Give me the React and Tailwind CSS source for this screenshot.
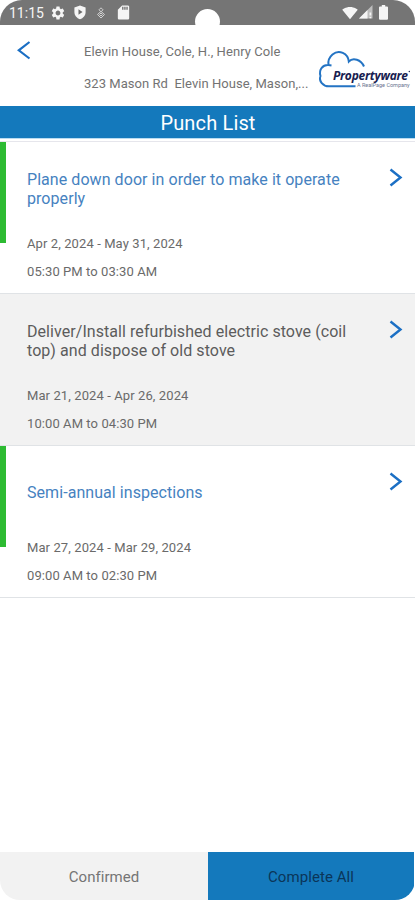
import React from 'react'
import { MdSettings, MdSdCard, MdSignalWifi4Bar } from 'react-icons/md'

const tasks = [
  {
    id: 1,
    title: ['Plane down door in order to make it operate', 'properly'],
    dates: 'Apr 2, 2024 - May 31, 2024',
    hours: '05:30 PM to 03:30 AM',
    open: true,
  },
  {
    id: 2,
    title: ['Deliver/Install refurbished electric stove (coil', 'top) and dispose of old stove'],
    dates: 'Mar 21, 2024 - Apr 26, 2024',
    hours: '10:00 AM to 04:30 PM',
    open: false,
  },
  {
    id: 3,
    title: ['Semi-annual inspections'],
    dates: 'Mar 27, 2024 - Mar 29, 2024',
    hours: '09:00 AM to 02:30 PM',
    open: true,
  },
]

export default function App() {
  return (
    <div className="h-[900px] w-[415px] bg-white font-['Roboto',sans-serif]">
      <div className="flex h-full flex-col overflow-hidden rounded-t-[22px] rounded-b-[20px] bg-white">
        <StatusBar />
        <Header />
        <div className="flex h-8 shrink-0 items-center justify-center bg-[#1479bc] pt-0.5 pl-px text-[20px] tracking-[0.15px] text-white">
          <h1>Punch List</h1>
        </div>
        <div className="h-1 shrink-0 border-t border-b border-t-[#b9dcf1] border-b-[#e6e6ec]" />
        <ul>
          {tasks.map((t) => (
            <TaskRow key={t.id} task={t} />
          ))}
        </ul>
        <div className="mt-auto flex h-12 shrink-0">
          <button className="w-[208px] bg-[#f2f2f2] pt-0.5 text-[15px] tracking-[0.03px] text-[#757575]">Confirmed</button>
          <button className="mr-px flex-1 bg-[#1479bc] pt-0.5 text-[15px] tracking-[0.08px] text-[#0b3558]">Complete All</button>
        </div>
      </div>
    </div>
  )
}

function StatusBar() {
  return (
    <div className="relative flex h-[25px] shrink-0 items-center bg-[#757575] pl-[9px] text-[#f5f5f5]">
      <span className="w-9 pt-0.5 text-[14px]">11:15</span>
      <MdSettings className="ml-[5px] size-4" />
      <svg className="ml-2 h-[15px] w-3" viewBox="0 0 12 15">
        <path d="M6 0.5 11.6 2.5V7c0 3.4-2.3 6.1-5.6 7.3C2.7 13.1.4 10.4.4 7V2.5Z" fill="currentColor" />
        <path d="M4.500 4.300 8.500 7 4.500 9.700Z" fill="#6b6b6b" />
      </svg>
      <svg className="ml-[10px] h-3 w-2.5" viewBox="0 0 10 12" fill="none" stroke="#d0d0d0">
        <path d="M5 .8 7 2.800 5 4.800 3 2.800ZM5 4.300 8.500 7.500 5 11 1.500 7.500ZM5 6 6.500 7.500 5 9 3.500 7.500Z" />
      </svg>
      <MdSdCard className="ml-[9px] size-[17px]" />
      {/* camera cutout */}
      <div className="absolute top-[9px] left-[195px] size-[25px] rounded-full bg-white" />
      <MdSignalWifi4Bar className="absolute top-[5px] left-[342px] size-4" />
      <svg className="absolute top-[5px] left-[359px] size-3.5" viewBox="0 0 14 14">
        <path d="M0 13.500 13.500 0V13.500Z" fill="#bdbdbd" />
        <path d="M0 13.500 8.500 5V13.500ZM10.500 7.500h1.700v3h-1.700ZM10.500 11.700h1.700v1.500h-1.700Z" fill="#f5f5f5" />
      </svg>
      <svg className="absolute top-[5px] left-[379px] h-[15px] w-[9px]" viewBox="0 0 9 15" fill="currentColor">
        <path d="M2.800 0h3.400v1.500H8q1 0 1 1V13.800q0 1-1 1H1q-1 0-1-1V2.500q0-1 1-1h1.800Z" />
      </svg>
    </div>
  )
}

function Header() {
  return (
    <div className="flex h-[81px] shrink-0 text-[13px] text-[#737373]">
      <button className="flex w-[84px] items-start pt-4 pl-[17px]">
        <svg className="h-[19px] w-[14px]" viewBox="0 0 14 19" fill="none" stroke="#1b6fc4" strokeWidth="2.200">
          <path d="M12.500 1 1.800 9.300 12.500 17.500" />
        </svg>
      </button>
      <div className="w-[230px] pt-[17px] whitespace-pre">
        <p className="h-8 leading-5 tracking-[0.08px]">Elevin House, Cole, H., Henry Cole</p>
        <p className="leading-5 tracking-[0.04px]">323 Mason Rd  Elevin House, Mason,...</p>
      </div>
      <Logo />
    </div>
  )
}

function Logo() {
  return (
    <div className="relative mt-[15px] h-[60px] w-[101px] shrink-0">
      <svg className="size-full" viewBox="0 0 101 60">
        <path
          d="M50 26.500C47 19.500 39 17 34.800 21.500 34 13.500 25 9 18.500 14.500 15 17.500 14 22 14.500 25 9 24.500 4.500 29.500 6.500 36 4.500 41 9 46.300 15 46.300H41.500M14.500 25 17.500 25.500"
          fill="none"
          stroke="#2474c4"
          strokeWidth="2"
        />
        <circle cx="95.300" cy="31.500" r="0.700" fill="#17204f" />
      </svg>
      <p className="absolute top-[28px] left-[19px] font-['Open_Sans',sans-serif] text-[12px] leading-[15px] font-bold tracking-[-0.25px] whitespace-nowrap text-[#17204f] italic">
        Propertyware
      </p>
      <p className="absolute top-[42px] left-[43px] text-[5.5px] leading-[7px] whitespace-nowrap text-[#6b7590]">A RealPage Company</p>
    </div>
  )
}

function TaskRow({ task }) {
  return (
    <li className={`flex h-[152px] border-b border-[#e0e3e6] ${task.open ? 'bg-white' : 'bg-[#f2f2f2]'}`}>
      <div className={`h-[101px] w-1.5 ${task.open ? 'bg-[#2dbb32]' : ''}`} />
      <div className="flex-1 pt-7 pl-[21px]">
        <div className={`flex h-[58px] flex-col whitespace-nowrap text-[16px] leading-[19px] tracking-[0.06px] ${task.open ? 'text-[#4682bf]' : 'text-[#5c5c5c]'} ${task.title.length === 1 ? 'pt-[9px]' : ''}`}>
          {task.title.map((line) => (
            <p key={line}>{line}</p>
          ))}
        </div>
        <p className="mt-1.5 h-7 text-[13px] leading-5 tracking-[0.1px] text-[#6a6a6a]">{task.dates}</p>
        <p className="text-[13px] leading-5 tracking-[0.08px] text-[#6a6a6a]">{task.hours}</p>
      </div>
      <svg className="mt-[26px] mr-3 h-[19px] w-[14px]" viewBox="0 0 14 19" fill="none" stroke="#1b6fc4" strokeWidth="2.400">
        <path d="M1.500 1.500 11.500 9.500 1.500 17.500" />
      </svg>
    </li>
  )
}
